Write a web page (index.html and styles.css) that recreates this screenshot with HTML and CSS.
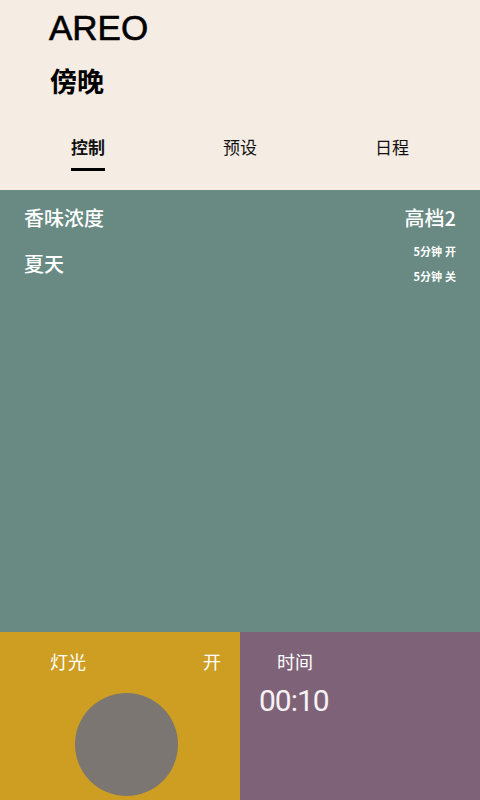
FILE: index.html
```html
<!DOCTYPE html>
<html lang="zh">
<head>
<meta charset="utf-8">
<link rel="stylesheet" href="styles.css">
</head>
<body>
<div class="app">
  <header class="header">
    <div class="brand">AREO</div>
    <div class="scene">傍晚</div>
    <nav class="tabs">
      <div class="tab active"><span>控制</span></div>
      <div class="tab"><span>预设</span></div>
      <div class="tab"><span>日程</span></div>
    </nav>
  </header>
  <section class="aroma">
    <div class="row">
      <div class="title">香味浓度</div>
      <div class="title">高档2</div>
    </div>
    <div class="row row2">
      <div class="title">夏天</div>
      <div class="timers">
        <div>5分钟<span class="state">开</span></div>
        <div>5分钟<span class="state">关</span></div>
      </div>
    </div>
  </section>
  <section class="bottom">
    <div class="light">
      <div class="light-head">
        <span>灯光</span>
        <span>开</span>
      </div>
      <div class="knob"></div>
    </div>
    <div class="time">
      <div class="time-label">时间</div>
      <div class="time-value">00:10</div>
    </div>
  </section>
</div>
</body>
</html>
```

FILE: styles.css
```css
html, body {
  margin: 0;
  padding: 0;
}
body {
  width: 480px;
  height: 800px;
  overflow: hidden;
  font-family: "Noto Sans CJK SC", "Noto Sans", sans-serif;
}
.app {
  display: flex;
  flex-direction: column;
  height: 800px;
}
.header {
  background: #f5ece4;
  height: 190px;
  box-sizing: border-box;
  padding-top: 8px;
}
.brand {
  padding-left: 49px;
  font-family: "Liberation Sans", sans-serif;
  font-size: 35px;
  line-height: 40px;
  color: #000;
  -webkit-text-stroke: 0.6px #000;
}
.scene {
  padding-left: 50px;
  margin-top: 16px;
  font-size: 27px;
  font-weight: bold;
  line-height: 34px;
  color: #000;
}
.tabs {
  display: grid;
  grid-template-columns: repeat(3, 1fr);
  margin: 37px 12px 0;
}
.tab {
  display: flex;
  justify-content: center;
  font-size: 17px;
  line-height: 24px;
  color: #111;
}
.tab span {
  padding-bottom: 9px;
  border-bottom: 3px solid transparent;
}
.tab.active span {
  font-weight: bold;
  border-bottom-color: #000;
}
.aroma {
  background: #688a82;
  height: 442px;
  box-sizing: border-box;
  padding: 14px 24px 0;
  color: #fff;
}
.row {
  display: flex;
  justify-content: space-between;
  align-items: flex-start;
}
.row2 {
  margin-top: 11px;
}
.title {
  font-size: 20px;
  line-height: 28px;
  font-weight: 500;
}
.row2 .title {
  margin-top: 7px;
}
.timers {
  display: flex;
  flex-direction: column;
  align-items: flex-end;
  gap: 8px;
  font-size: 11px;
  font-weight: bold;
  line-height: 17px;
}
.state {
  margin-left: 3px;
}
.bottom {
  display: grid;
  grid-template-columns: 1fr 1fr;
  height: 168px;
}
.light {
  background: #ce9e22;
  color: #fff;
  display: flex;
  flex-direction: column;
  align-items: center;
  overflow: hidden;
}
.light-head {
  align-self: stretch;
  display: flex;
  justify-content: space-between;
  padding: 16px 19px 0 50px;
  font-size: 18px;
  line-height: 26px;
}
.knob {
  width: 103px;
  height: 103px;
  border-radius: 50%;
  background: #7b7672;
  margin-top: 19px;
  margin-left: 12px;
}
.time {
  background: #7e6378;
  color: #fff;
  padding: 16px 0 0 19px;
}
.time-label {
  font-size: 18px;
  line-height: 26px;
  padding-left: 18px;
}
.time-value {
  font-family: "Roboto", sans-serif;
  font-size: 30px;
  line-height: 40px;
  letter-spacing: -1px;
  margin-top: 7px;
  color: #f6f2f5;
}
```
